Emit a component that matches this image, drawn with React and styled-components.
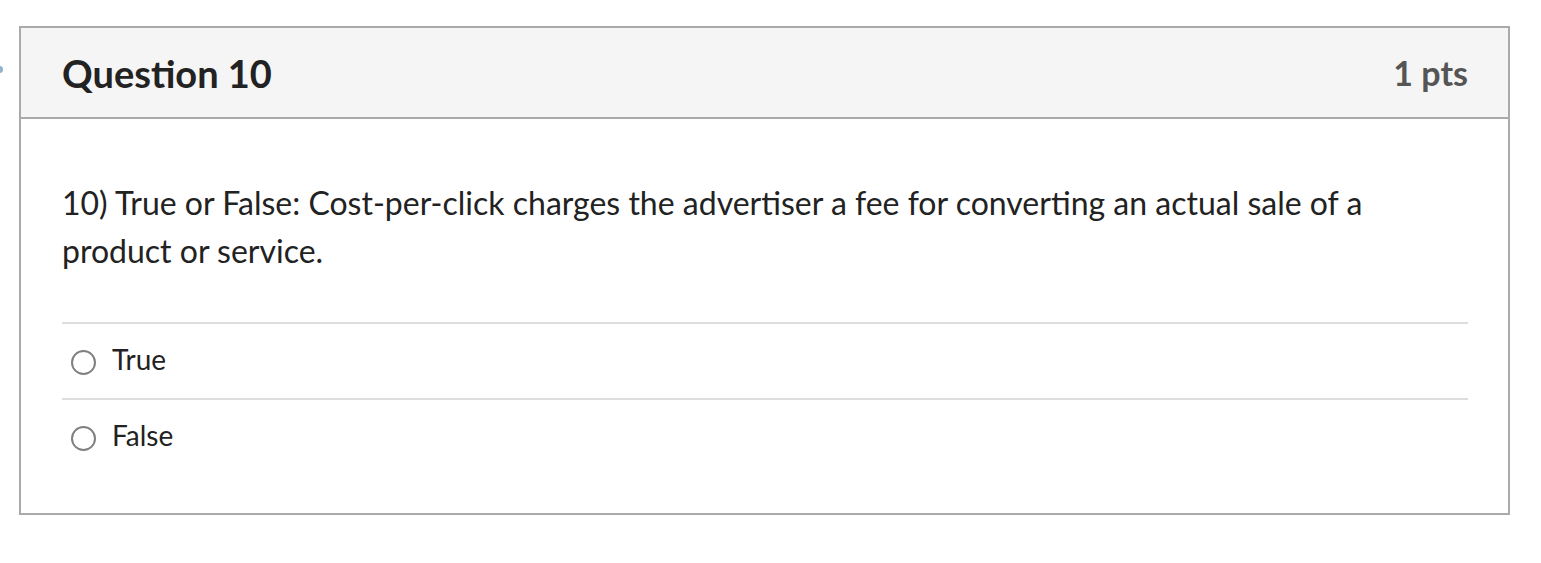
import styled, { createGlobalStyle } from 'styled-components';

const GlobalStyle = createGlobalStyle`
  html, body {
    margin: 0;
    padding: 0;
    background: #ffffff;
  }
  body {
    font-family: Lato, 'Noto Sans', 'Liberation Sans', sans-serif;
    color: #2d3b45;
  }
`;

const Page = styled.div`
  position: relative;
  padding: 26px 31px 48px 19px;
  width: 1541px;
  box-sizing: border-box;
`;

const EdgeMark = styled.span`
  position: absolute;
  left: -4px;
  top: 66px;
  width: 7px;
  height: 7px;
  border-radius: 50%;
  background: #8fb3cc;
`;

const QuestionCard = styled.div`
  border: 2px solid #aaaaaa;
  background: #ffffff;
`;

const Header = styled.div`
  display: flex;
  align-items: center;
  justify-content: space-between;
  height: 89px;
  padding: 0 40px 0 41px;
  background: #f5f5f5;
  border-bottom: 2px solid #aaaaaa;
  h2 {
    margin: 0;
    font-size: 38px;
    font-weight: 700;
    color: #222222;
  }
  span {
    font-size: 34px;
    font-weight: 700;
    color: #555555;
  }
`;

const Body = styled.div`
  padding: 60px 40px 39px 41px;
`;

const Prompt = styled.p`
  margin: 0 0 47px;
  font-size: 32px;
  line-height: 48px;
  color: #222222;
`;

const Answer = styled.label`
  display: flex;
  align-items: center;
  gap: 16px;
  height: 74px;
  padding-left: 9px;
  border-top: 2px solid #dddddd;
  font-size: 28px;
  color: #222222;
  cursor: pointer;
`;

const Radio = styled.span`
  width: 21px;
  height: 21px;
  border-radius: 50%;
  border: 2px solid #808080;
  background: #ffffff;
  flex-shrink: 0;
  margin-top: 2px;
`;

const AnswerText = styled.span`
  margin-bottom: 4px;
`;

const answers = ['True', 'False'];

const App = () => {
  return (
    <>
      <GlobalStyle />
      <Page>
        <EdgeMark />
        <QuestionCard>
          <Header>
            <h2>Question 10</h2>
            <span>1 pts</span>
          </Header>
          <Body>
            <Prompt>
              10) True or False: Cost-per-click charges the advertiser a fee for converting an actual sale of a
              product or service.
            </Prompt>
            {answers.map((a) => (
              <Answer key={a}>
                <Radio />
                <AnswerText>{a}</AnswerText>
              </Answer>
            ))}
          </Body>
        </QuestionCard>
      </Page>
    </>
  );
};

export default App;
